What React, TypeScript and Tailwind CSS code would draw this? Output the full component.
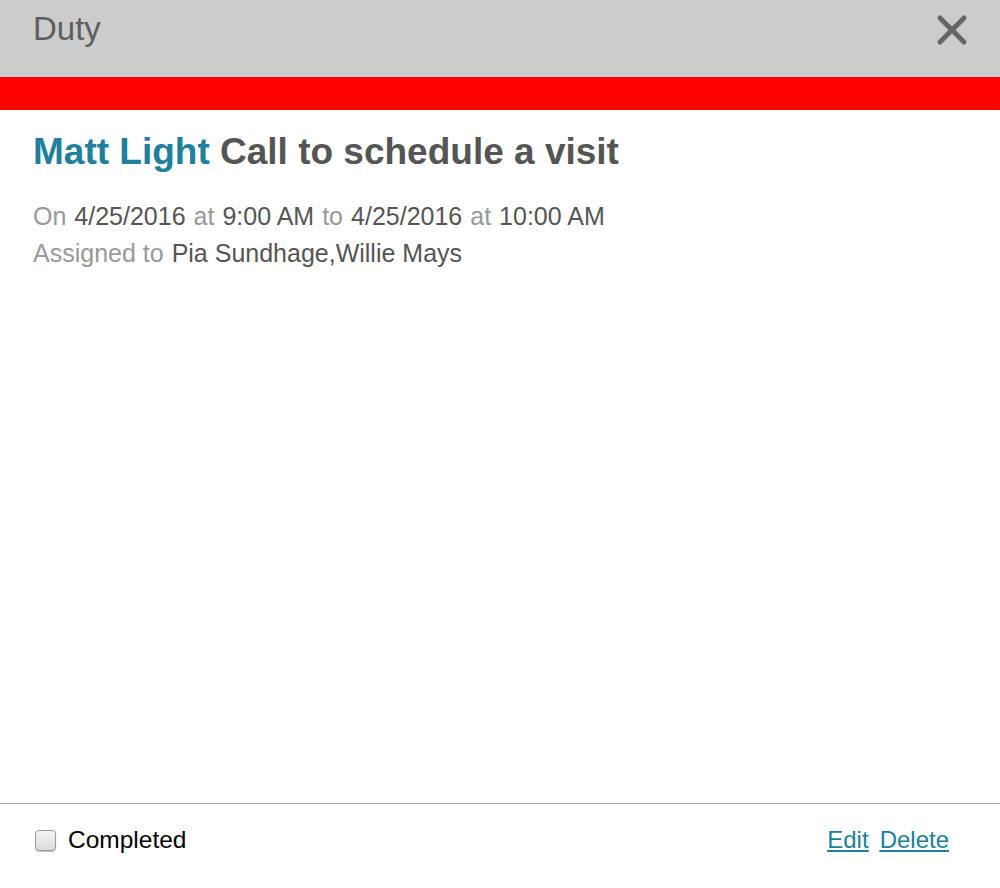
const App = () => {
  return (
    <div
      className="flex h-[888px] w-[1000px] flex-col bg-white"
      style={{ fontFamily: '"Liberation Sans", Arial, sans-serif' }}
    >
      <div className="flex h-[77px] items-center justify-between bg-[#cccccc] pl-[33px] pr-[32px]">
        <div className="pb-[20px] text-[33px] text-[#5e5e5e]">Duty</div>
        <button className="pb-[18px] text-[#666666]" aria-label="Close">
          <svg width="32" height="32" viewBox="0 0 32 32">
            <path
              d="M4 4 L28 28 M28 4 L4 28"
              stroke="currentColor"
              strokeWidth="5"
              strokeLinecap="round"
            />
          </svg>
        </button>
      </div>
      <div className="h-[33px] bg-[#ff0000]" />
      <div className="flex-1 px-[33px] pt-[19px]">
        <h1 className="text-[37px] font-bold leading-[46px]">
          <span className="text-[#217f9d]">Matt Light</span>{" "}
          <span className="text-[#555555]">Call to schedule a visit</span>
        </h1>
        <div className="mt-[23px] text-[25px] leading-[37px] text-[#555555]">
          <div className="flex gap-[8px]">
            <span className="text-[#999999]">On</span>
            <span>4/25/2016</span>
            <span className="text-[#999999]">at</span>
            <span>9:00 AM</span>
            <span className="text-[#999999]">to</span>
            <span>4/25/2016</span>
            <span className="text-[#999999]">at</span>
            <span>10:00 AM</span>
          </div>
          <div className="flex gap-[8px]">
            <span className="text-[#999999]">Assigned to</span>
            <span>Pia Sundhage,Willie Mays</span>
          </div>
        </div>
      </div>
      <div className="flex h-[85px] items-start justify-between border-t border-[#aaaaaa] pl-[35px] pr-[51px] pt-[18px]">
        <label className="flex items-center gap-[12px] text-[24.5px] text-black">
          <span className="h-[21px] w-[21px] rounded-[4px] border border-[#9a9a9a] bg-gradient-to-b from-[#f4f4f4] to-[#dcdcdc] shadow-[0_1px_1px_rgba(0,0,0,0.25)]" />
          Completed
        </label>
        <div className="flex gap-[11px] text-[24px] text-[#217f9d] underline">
          <a href="#">Edit</a>
          <a href="#">Delete</a>
        </div>
      </div>
    </div>
  );
};

export default App;
